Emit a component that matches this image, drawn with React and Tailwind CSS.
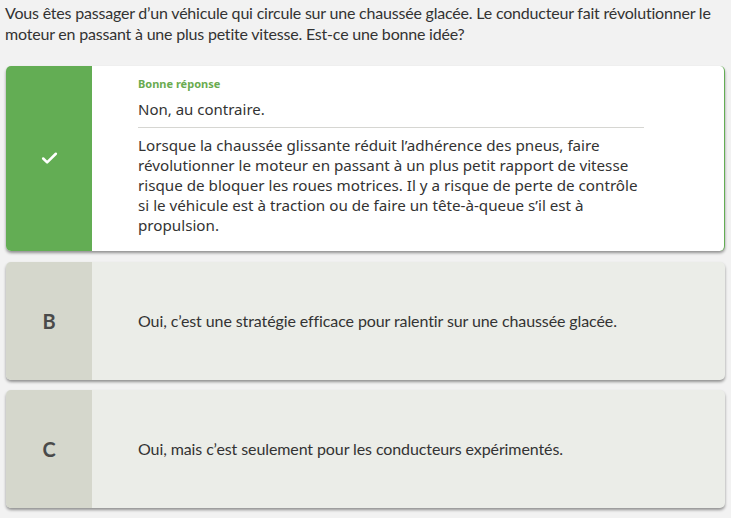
import { Check } from "lucide-react";

const lato = { fontFamily: "Lato, 'Liberation Sans', sans-serif" };

function Option({ letter, text }) {
  return (
    <div className="flex h-[118px] rounded-[5px] overflow-hidden bg-[#ebede8] shadow-[0_2px_3px_rgba(0,0,0,0.4)]">
      <div className="w-[86px] shrink-0 bg-[#d5d7cc] flex items-center justify-center text-[20px] font-bold text-[#4a4a4a]">
        {letter}
      </div>
      <div className="flex items-center pl-[46px] text-[16px] tracking-[-0.1px] text-[#333]">
        {text}
      </div>
    </div>
  );
}

export default function App() {
  return (
    <div
      className="min-h-screen bg-[#f2f2f2] px-[6px] pb-[10px]"
      style={lato}
    >
      <p className="-ml-px -mr-[6px] text-[16px] tracking-[-0.2px] leading-[21px] text-[#333] pt-[2px]">
        Vous êtes passager d’un véhicule qui circule sur une chaussée glacée. Le conducteur fait révolutionner le moteur en passant à une plus petite vitesse. Est-ce une bonne idée?
      </p>

      <div className="flex flex-col gap-[10px] mt-[22px] w-[719px]">
        {/* bonne réponse */}
        <div className="flex rounded-[5px] overflow-hidden bg-white border-r-[1.5px] border-[#63ad54] shadow-[0_2px_3px_rgba(0,0,0,0.4)] mb-px">
          <div className="w-[86px] shrink-0 bg-[#63ad54] flex items-center justify-center">
            <Check size={19} strokeWidth={3.2} className="text-white" />
          </div>
          <div
            className="flex-1 pl-[46px] pr-[80px] pt-[10px] pb-[16px] text-[#333]"
            style={{ fontFamily: "'Noto Sans', 'Open Sans', sans-serif" }}
          >
            <div className="text-[11px] font-bold text-[#6aab4f] leading-[16px]">
              Bonne réponse
            </div>
            <div className="text-[15px] leading-[20px] mt-[7px] pb-[8px] border-b border-[#d6d6d2]">
              Non, au contraire.
            </div>
            <p className="text-[15.2px] leading-[20px] mt-[7px]">
              Lorsque la chaussée glissante réduit l’adhérence des pneus, faire révolutionner le moteur en passant à un plus petit rapport de vitesse risque de bloquer les roues motrices. Il y a risque de perte de contrôle si le véhicule est à traction ou de faire un tête-à-queue s’il est à propulsion.
            </p>
          </div>
        </div>

        <Option letter="B" text="Oui, c’est une stratégie efficace pour ralentir sur une chaussée glacée." />
        <Option letter="C" text="Oui, mais c’est seulement pour les conducteurs expérimentés." />
      </div>
    </div>
  );
}
